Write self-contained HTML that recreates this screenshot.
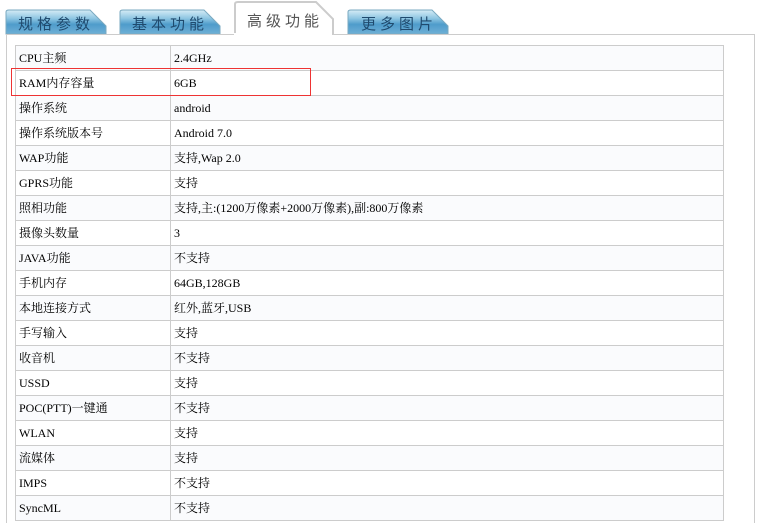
<!DOCTYPE html>
<html><head><meta charset="utf-8"><style>
body{margin:0;background:#fff;width:758px;height:522px;overflow:hidden;position:relative;font-family:"Liberation Serif","Noto Serif CJK SC",serif;font-size:12px;color:#000}
.box{position:absolute;left:6px;top:34px;width:747px;height:488px;border:1px solid #ccc;border-bottom:none}
table{position:absolute;left:15px;top:45px;border-collapse:collapse;width:709px}
td{border:1px solid #ccc;height:24px;padding:0 0 0 3px;line-height:24px;white-space:nowrap}
td:first-child{width:151px}
tr:nth-child(odd) td{background:#fafbfd}
.red{position:absolute;left:11px;top:68px;width:298px;height:26px;border:1px solid #e33}
.tab{position:absolute;font-family:"Liberation Sans","Noto Sans CJK SC",sans-serif;font-size:15px;letter-spacing:4px}
</style></head><body>
<svg width="758" height="40" style="position:absolute;left:0;top:0">
<defs><linearGradient id="g" x1="0" y1="0" x2="0" y2="1">
<stop offset="0" stop-color="#d6ecf6"/><stop offset="0.35" stop-color="#8ec6e2"/><stop offset="0.6" stop-color="#4f9ccb"/><stop offset="1" stop-color="#6fb0d6"/></linearGradient></defs>
<path d="M6 34 V12 Q6 10 9 10 H90 L106 26 V34Z" fill="url(#g)" stroke="#7aa9c0"/>
<path d="M120 34 V12 Q120 10 123 10 H204 L220 26 V34Z" fill="url(#g)" stroke="#7aa9c0"/>
<path d="M348 34 V12 Q348 10 351 10 H432 L448 26 V34Z" fill="url(#g)" stroke="#7aa9c0"/>
<path d="M235 35 V4 Q235 2 238 2 H316 L333 19 V35" fill="#fff" stroke="#ccc" stroke-width="2"/>
</svg>
<div class="box"></div>
<svg width="758" height="40" style="position:absolute;left:0;top:0"><rect x="234" y="33" width="98" height="3" fill="#fff"/></svg>
<div class="tab" style="left:18px;top:13px;color:#1f4a6e">规格参数</div>
<div class="tab" style="left:132px;top:13px;color:#1f4a6e">基本功能</div>
<div class="tab" style="left:247px;top:10px;color:#555">高级功能</div>
<div class="tab" style="left:361px;top:13px;color:#1f4a6e">更多图片</div>
<table>
<tr><td>CPU主频</td><td>2.4GHz</td></tr>
<tr><td>RAM内存容量</td><td>6GB</td></tr>
<tr><td>操作系统</td><td>android</td></tr>
<tr><td>操作系统版本号</td><td>Android 7.0</td></tr>
<tr><td>WAP功能</td><td>支持,Wap 2.0</td></tr>
<tr><td>GPRS功能</td><td>支持</td></tr>
<tr><td>照相功能</td><td>支持,主:(1200万像素+2000万像素),副:800万像素</td></tr>
<tr><td>摄像头数量</td><td>3</td></tr>
<tr><td>JAVA功能</td><td>不支持</td></tr>
<tr><td>手机内存</td><td>64GB,128GB</td></tr>
<tr><td>本地连接方式</td><td>红外,蓝牙,USB</td></tr>
<tr><td>手写输入</td><td>支持</td></tr>
<tr><td>收音机</td><td>不支持</td></tr>
<tr><td>USSD</td><td>支持</td></tr>
<tr><td>POC(PTT)一键通</td><td>不支持</td></tr>
<tr><td>WLAN</td><td>支持</td></tr>
<tr><td>流媒体</td><td>支持</td></tr>
<tr><td>IMPS</td><td>不支持</td></tr>
<tr><td>SyncML</td><td>不支持</td></tr>
</table>
<div class="red"></div>
</body></html>
